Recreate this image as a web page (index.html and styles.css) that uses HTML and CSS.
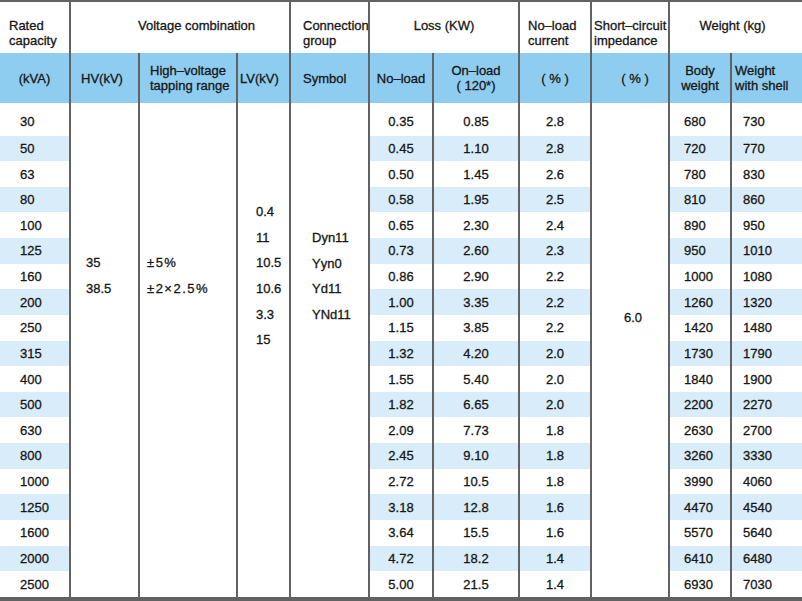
FILE: index.html
```html
<!DOCTYPE html>
<html lang="en">
<head>
<meta charset="utf-8">
<title>Transformer specification</title>
<link rel="stylesheet" href="styles.css">
</head>
<body>
<div class="spec">
  <div class="cell h1 p-rated">Rated<br>capacity</div>
  <div class="cell h1 bl span3 p-volt">Voltage combination</div>
  <div class="cell h1 bl p-conn">Connection<br>group</div>
  <div class="cell h1 bl span2 ctr">Loss (KW)</div>
  <div class="cell h1 bl p-cur">No–load<br>current</div>
  <div class="cell h1 bl p-imp">Short–circuit<br>impedance</div>
  <div class="cell h1 bl span2 ctr p-wt">Weight (kg)</div>

  <div class="cell h2 ctr">(kVA)</div>
  <div class="cell h2 bl p-hv">HV(kV)</div>
  <div class="cell h2 bl p-tap">High–voltage<br>tapping range</div>
  <div class="cell h2 bl p-lv">LV(kV)</div>
  <div class="cell h2 bl p-sym">Symbol</div>
  <div class="cell h2 bl ctr">No–load</div>
  <div class="cell h2 bl ctr">On–load<br>( 120*)</div>
  <div class="cell h2 bl ctr">( % )</div>
  <div class="cell h2 bl ctr p-impc">( % )</div>
  <div class="cell h2 bl ctr">Body<br>weight</div>
  <div class="cell h2 bl p-shellh">Weight<br>with shell</div>

  <div class="cell bl merged m-hv">35<br>38.5</div>
  <div class="cell bl merged m-tap">±5%<br>±2×2.5%</div>
  <div class="cell bl merged m-lv">0.4<br>11<br>10.5<br>10.6<br>3.3<br>15</div>
  <div class="cell bl merged m-sym">Dyn11<br>Yyn0<br>Yd11<br>YNd11</div>
  <div class="cell bl merged m-imp">6.0</div>

  <div class="cell first d-cap">30</div><div class="cell first bl ctr">0.35</div><div class="cell first bl ctr">0.85</div><div class="cell first bl ctr">2.8</div><div class="cell first bl d-body">680</div><div class="cell first bl d-shell">730</div>
  <div class="cell alt d-cap">50</div><div class="cell alt bl ctr">0.45</div><div class="cell alt bl ctr">1.10</div><div class="cell alt bl ctr">2.8</div><div class="cell alt bl d-body">720</div><div class="cell alt bl d-shell">770</div>
  <div class="cell d-cap">63</div><div class="cell bl ctr">0.50</div><div class="cell bl ctr">1.45</div><div class="cell bl ctr">2.6</div><div class="cell bl d-body">780</div><div class="cell bl d-shell">830</div>
  <div class="cell alt d-cap">80</div><div class="cell alt bl ctr">0.58</div><div class="cell alt bl ctr">1.95</div><div class="cell alt bl ctr">2.5</div><div class="cell alt bl d-body">810</div><div class="cell alt bl d-shell">860</div>
  <div class="cell d-cap">100</div><div class="cell bl ctr">0.65</div><div class="cell bl ctr">2.30</div><div class="cell bl ctr">2.4</div><div class="cell bl d-body">890</div><div class="cell bl d-shell">950</div>
  <div class="cell alt d-cap">125</div><div class="cell alt bl ctr">0.73</div><div class="cell alt bl ctr">2.60</div><div class="cell alt bl ctr">2.3</div><div class="cell alt bl d-body">950</div><div class="cell alt bl d-shell">1010</div>
  <div class="cell d-cap">160</div><div class="cell bl ctr">0.86</div><div class="cell bl ctr">2.90</div><div class="cell bl ctr">2.2</div><div class="cell bl d-body">1000</div><div class="cell bl d-shell">1080</div>
  <div class="cell alt d-cap">200</div><div class="cell alt bl ctr">1.00</div><div class="cell alt bl ctr">3.35</div><div class="cell alt bl ctr">2.2</div><div class="cell alt bl d-body">1260</div><div class="cell alt bl d-shell">1320</div>
  <div class="cell d-cap">250</div><div class="cell bl ctr">1.15</div><div class="cell bl ctr">3.85</div><div class="cell bl ctr">2.2</div><div class="cell bl d-body">1420</div><div class="cell bl d-shell">1480</div>
  <div class="cell alt d-cap">315</div><div class="cell alt bl ctr">1.32</div><div class="cell alt bl ctr">4.20</div><div class="cell alt bl ctr">2.0</div><div class="cell alt bl d-body">1730</div><div class="cell alt bl d-shell">1790</div>
  <div class="cell d-cap">400</div><div class="cell bl ctr">1.55</div><div class="cell bl ctr">5.40</div><div class="cell bl ctr">2.0</div><div class="cell bl d-body">1840</div><div class="cell bl d-shell">1900</div>
  <div class="cell alt d-cap">500</div><div class="cell alt bl ctr">1.82</div><div class="cell alt bl ctr">6.65</div><div class="cell alt bl ctr">2.0</div><div class="cell alt bl d-body">2200</div><div class="cell alt bl d-shell">2270</div>
  <div class="cell d-cap">630</div><div class="cell bl ctr">2.09</div><div class="cell bl ctr">7.73</div><div class="cell bl ctr">1.8</div><div class="cell bl d-body">2630</div><div class="cell bl d-shell">2700</div>
  <div class="cell alt d-cap">800</div><div class="cell alt bl ctr">2.45</div><div class="cell alt bl ctr">9.10</div><div class="cell alt bl ctr">1.8</div><div class="cell alt bl d-body">3260</div><div class="cell alt bl d-shell">3330</div>
  <div class="cell d-cap">1000</div><div class="cell bl ctr">2.72</div><div class="cell bl ctr">10.5</div><div class="cell bl ctr">1.8</div><div class="cell bl d-body">3990</div><div class="cell bl d-shell">4060</div>
  <div class="cell alt d-cap">1250</div><div class="cell alt bl ctr">3.18</div><div class="cell alt bl ctr">12.8</div><div class="cell alt bl ctr">1.6</div><div class="cell alt bl d-body">4470</div><div class="cell alt bl d-shell">4540</div>
  <div class="cell d-cap">1600</div><div class="cell bl ctr">3.64</div><div class="cell bl ctr">15.5</div><div class="cell bl ctr">1.6</div><div class="cell bl d-body">5570</div><div class="cell bl d-shell">5640</div>
  <div class="cell alt d-cap">2000</div><div class="cell alt bl ctr">4.72</div><div class="cell alt bl ctr">18.2</div><div class="cell alt bl ctr">1.4</div><div class="cell alt bl d-body">6410</div><div class="cell alt bl d-shell">6480</div>
  <div class="cell d-cap">2500</div><div class="cell bl ctr">5.00</div><div class="cell bl ctr">21.5</div><div class="cell bl ctr">1.4</div><div class="cell bl d-body">6930</div><div class="cell bl d-shell">7030</div>
</div>
</body>
</html>
```

FILE: styles.css
```css
* {
  box-sizing: border-box;
}

html,
body {
  margin: 0;
  padding: 0;
  background: #ffffff;
}

body {
  overflow: hidden;
  font-family: "Liberation Sans", Arial, Helvetica, sans-serif;
  font-size: 13px;
  color: #161616;
}

.spec {
  display: grid;
  width: 802px;
  grid-template-columns: 69px 69px 98px 53px 79px 64px 86px 72px 78px 62px 72px;
  grid-template-rows: 51px 50px 32.6px repeat(18, 25.63px);
  border-top: 2px solid #626262;
  border-bottom: 4px solid #626262;
  -webkit-text-stroke: 0.3px #161616;
}

.cell {
  display: flex;
  align-items: center;
  white-space: nowrap;
  line-height: 15px;
  min-width: 0;
}

.bl {
  border-left: 2px solid #626262;
}

.ctr {
  justify-content: center;
  text-align: center;
}

.span2 {
  grid-column: span 2;
}

.span3 {
  grid-column: span 3;
}

/* header row 1 */
.h1 {
  align-items: flex-start;
  padding-top: 16px;
  background: #ffffff;
}

.p-rated { padding-left: 9px; }
.p-volt { padding-left: 67px; }
.p-conn { padding-left: 12px; }
.p-cur { padding-left: 8px; }
.p-imp { padding-left: 2px; }
.p-wt { padding-right: 7px; }

/* header row 2 */
.h2 {
  background: #8ecdf0;
}

.p-hv { padding-left: 10px; }
.p-tap { padding-left: 10px; }
.p-lv { padding-left: 2px; }
.p-sym { padding-left: 12px; }
.p-impc { padding-left: 10px; }
.p-shellh { padding-left: 3px; }

/* body */
.first {
  padding-top: 4px;
}

.alt {
  background: #d9ecf9;
}

.d-cap { padding-left: 20px; }
.d-body { padding-left: 14px; }
.d-shell { padding-left: 11px; }

.merged {
  align-items: flex-start;
  line-height: 25.63px;
  background: #ffffff;
  grid-row: 3 / 22;
}

.m-hv {
  grid-column: 2;
  padding-left: 15px;
  padding-top: 147px;
}

.m-tap {
  grid-column: 3;
  padding-left: 7px;
  padding-top: 147px;
  letter-spacing: 1.5px;
}

.m-lv {
  grid-column: 4;
  padding-left: 18px;
  padding-top: 96px;
}

.m-sym {
  grid-column: 5;
  padding-left: 21px;
  padding-top: 122px;
}

.m-imp {
  grid-column: 9;
  justify-content: center;
  padding-left: 6px;
  padding-top: 202px;
}
```
